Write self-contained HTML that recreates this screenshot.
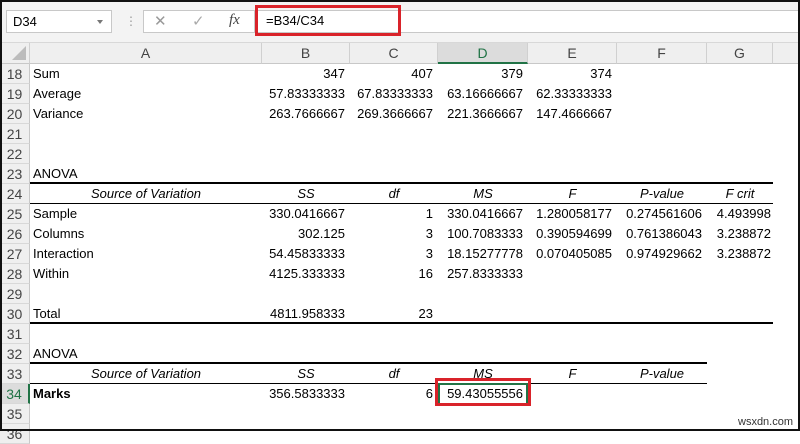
<!DOCTYPE html>
<html><head><style>
*{margin:0;padding:0;box-sizing:border-box}
body{width:800px;height:431px;overflow:hidden;background:#fff;font-family:"Liberation Sans",sans-serif;font-size:13px;color:#000;position:relative}
.fb{position:absolute;left:0;top:0;width:800px;height:43px;background:#f3f3f3;border-bottom:1px solid #d8d8d8}
.nb{position:absolute;left:6px;top:10px;width:106px;height:23px;background:#fff;border:1px solid #c8c8c8;padding:3px 6px;font-size:13px}
.nb:after{content:"";position:absolute;right:8px;top:9px;border:3px solid transparent;border-top:4px solid #777}
.ib{position:absolute;left:143px;top:10px;width:112px;height:23px;background:#fff;border:1px solid #c8c8c8}
.fx{position:absolute;left:255px;top:10px;width:545px;height:23px;background:#fff;border:1px solid #c8c8c8}
.red{position:absolute;left:255px;top:5px;width:146px;height:31px;border:3px solid #d9232a;padding:5px 8px;font-size:13px}
.hd{position:absolute;top:43px;height:21px;background:#efefef;border-right:1px solid #d0d0d0;border-bottom:1px solid #c8c8c8;text-align:center;line-height:21px;color:#444;font-size:14px}
.rh{position:absolute;left:0;width:30px;height:20px;background:#efefef;border-right:1px solid #c8c8c8;border-bottom:1px solid #d8d8d8;text-align:center;line-height:20px;color:#444;font-size:14px}
.c{position:absolute;height:20px;line-height:20px;white-space:nowrap}
.r{text-align:right;padding-right:5px}
.i{font-style:italic;text-align:center}
.ln{position:absolute;background:#000}
.frame{position:absolute;left:0;top:0;width:800px;height:431px;border:2px solid #111;pointer-events:none}
</style></head><body>
<div class="fb"></div>
<div class="nb">D34</div>
<div style="position:absolute;left:125px;top:14px;color:#999;font-size:12px">⋮</div>
<div class="ib"><span style="position:absolute;left:10px;top:1px;color:#999;font-size:15px">✕</span><span style="position:absolute;left:48px;top:1px;color:#aaa;font-size:15px">✓</span><span style="position:absolute;left:85px;top:1px;color:#444;font-style:italic;font-family:'Liberation Serif',serif;font-size:15px">fx</span></div>
<div class="fx"></div>
<div class="red">=B34/C34</div>

<div class="hd" style="left:0;width:30px"><span style="position:absolute;right:3px;bottom:3px;border-left:14px solid transparent;border-bottom:14px solid #bcbcbc"></span></div>
<div class="hd" style="left:30px;width:232px">A</div>
<div class="hd" style="left:262px;width:88px">B</div>
<div class="hd" style="left:350px;width:88px">C</div>
<div class="hd" style="left:438px;width:90px;background:#dcdcdc;color:#217346;border-bottom:2px solid #217346">D</div>
<div class="hd" style="left:528px;width:89px">E</div>
<div class="hd" style="left:617px;width:90px">F</div>
<div class="hd" style="left:707px;width:66px">G</div>
<div class="hd" style="left:773px;width:27px"></div>

<div class="rh" style="top:64px">18</div><div class="rh" style="top:84px">19</div><div class="rh" style="top:104px">20</div><div class="rh" style="top:124px">21</div><div class="rh" style="top:144px">22</div><div class="rh" style="top:164px">23</div><div class="rh" style="top:184px">24</div><div class="rh" style="top:204px">25</div><div class="rh" style="top:224px">26</div><div class="rh" style="top:244px">27</div><div class="rh" style="top:264px">28</div><div class="rh" style="top:284px">29</div><div class="rh" style="top:304px">30</div><div class="rh" style="top:324px">31</div><div class="rh" style="top:344px">32</div><div class="rh" style="top:364px">33</div><div class="rh" style="top:384px;background:#dcdcdc;color:#217346;border-right:2px solid #217346">34</div><div class="rh" style="top:404px">35</div><div class="rh" style="top:424px">36</div>

<div class="c" style="left:33px;top:64px">Sum</div>
<div class="c r" style="left:262px;width:88px;top:64px">347</div>
<div class="c r" style="left:350px;width:88px;top:64px">407</div>
<div class="c r" style="left:438px;width:90px;top:64px">379</div>
<div class="c r" style="left:528px;width:89px;top:64px">374</div>

<div class="c" style="left:33px;top:84px">Average</div>
<div class="c r" style="left:262px;width:88px;top:84px">57.83333333</div>
<div class="c r" style="left:350px;width:88px;top:84px">67.83333333</div>
<div class="c r" style="left:438px;width:90px;top:84px">63.16666667</div>
<div class="c r" style="left:528px;width:89px;top:84px">62.33333333</div>

<div class="c" style="left:33px;top:104px">Variance</div>
<div class="c r" style="left:262px;width:88px;top:104px">263.7666667</div>
<div class="c r" style="left:350px;width:88px;top:104px">269.3666667</div>
<div class="c r" style="left:438px;width:90px;top:104px">221.3666667</div>
<div class="c r" style="left:528px;width:89px;top:104px">147.4666667</div>

<div class="c" style="left:33px;top:164px">ANOVA</div>
<div class="ln" style="left:30px;top:182px;width:743px;height:2px"></div>
<div class="c i" style="left:30px;width:232px;top:184px">Source of Variation</div>
<div class="c i" style="left:262px;width:88px;top:184px">SS</div>
<div class="c i" style="left:350px;width:88px;top:184px">df</div>
<div class="c i" style="left:438px;width:90px;top:184px">MS</div>
<div class="c i" style="left:528px;width:89px;top:184px">F</div>
<div class="c i" style="left:617px;width:90px;top:184px">P-value</div>
<div class="c i" style="left:707px;width:66px;top:184px">F crit</div>
<div class="ln" style="left:30px;top:203px;width:743px;height:1px"></div>

<div class="c" style="left:33px;top:204px">Sample</div>
<div class="c r" style="left:262px;width:88px;top:204px">330.0416667</div>
<div class="c r" style="left:350px;width:88px;top:204px">1</div>
<div class="c r" style="left:438px;width:90px;top:204px">330.0416667</div>
<div class="c r" style="left:528px;width:89px;top:204px">1.280058177</div>
<div class="c r" style="left:617px;width:90px;top:204px">0.274561606</div>
<div class="c r" style="left:707px;width:66px;top:204px;padding-right:2px">4.493998</div>

<div class="c" style="left:33px;top:224px">Columns</div>
<div class="c r" style="left:262px;width:88px;top:224px">302.125</div>
<div class="c r" style="left:350px;width:88px;top:224px">3</div>
<div class="c r" style="left:438px;width:90px;top:224px">100.7083333</div>
<div class="c r" style="left:528px;width:89px;top:224px">0.390594699</div>
<div class="c r" style="left:617px;width:90px;top:224px">0.761386043</div>
<div class="c r" style="left:707px;width:66px;top:224px;padding-right:2px">3.238872</div>

<div class="c" style="left:33px;top:244px">Interaction</div>
<div class="c r" style="left:262px;width:88px;top:244px">54.45833333</div>
<div class="c r" style="left:350px;width:88px;top:244px">3</div>
<div class="c r" style="left:438px;width:90px;top:244px">18.15277778</div>
<div class="c r" style="left:528px;width:89px;top:244px">0.070405085</div>
<div class="c r" style="left:617px;width:90px;top:244px">0.974929662</div>
<div class="c r" style="left:707px;width:66px;top:244px;padding-right:2px">3.238872</div>

<div class="c" style="left:33px;top:264px">Within</div>
<div class="c r" style="left:262px;width:88px;top:264px">4125.333333</div>
<div class="c r" style="left:350px;width:88px;top:264px">16</div>
<div class="c r" style="left:438px;width:90px;top:264px">257.8333333</div>

<div class="c" style="left:33px;top:304px">Total</div>
<div class="c r" style="left:262px;width:88px;top:304px">4811.958333</div>
<div class="c r" style="left:350px;width:88px;top:304px">23</div>
<div class="ln" style="left:30px;top:322px;width:743px;height:2px"></div>

<div class="c" style="left:33px;top:344px">ANOVA</div>
<div class="ln" style="left:30px;top:362px;width:677px;height:2px"></div>
<div class="c i" style="left:30px;width:232px;top:364px">Source of Variation</div>
<div class="c i" style="left:262px;width:88px;top:364px">SS</div>
<div class="c i" style="left:350px;width:88px;top:364px">df</div>
<div class="c i" style="left:438px;width:90px;top:364px">MS</div>
<div class="c i" style="left:528px;width:89px;top:364px">F</div>
<div class="c i" style="left:617px;width:90px;top:364px">P-value</div>
<div class="ln" style="left:30px;top:383px;width:677px;height:1px"></div>

<div class="c" style="left:33px;top:384px;font-weight:bold">Marks</div>
<div class="c r" style="left:262px;width:88px;top:384px">356.5833333</div>
<div class="c r" style="left:350px;width:88px;top:384px">6</div>
<div style="position:absolute;left:438px;top:383px;width:90px;height:22px;border:2px solid #217346"></div>
<div class="c r" style="left:438px;width:90px;top:384px">59.43055556</div>
<div style="position:absolute;left:435px;top:378px;width:96px;height:28px;border:3px solid #d9232a"></div>

<div style="position:absolute;left:738px;top:416px;font-size:11px;color:#333">wsxdn.com</div>
<div class="frame"></div>
</body></html>
